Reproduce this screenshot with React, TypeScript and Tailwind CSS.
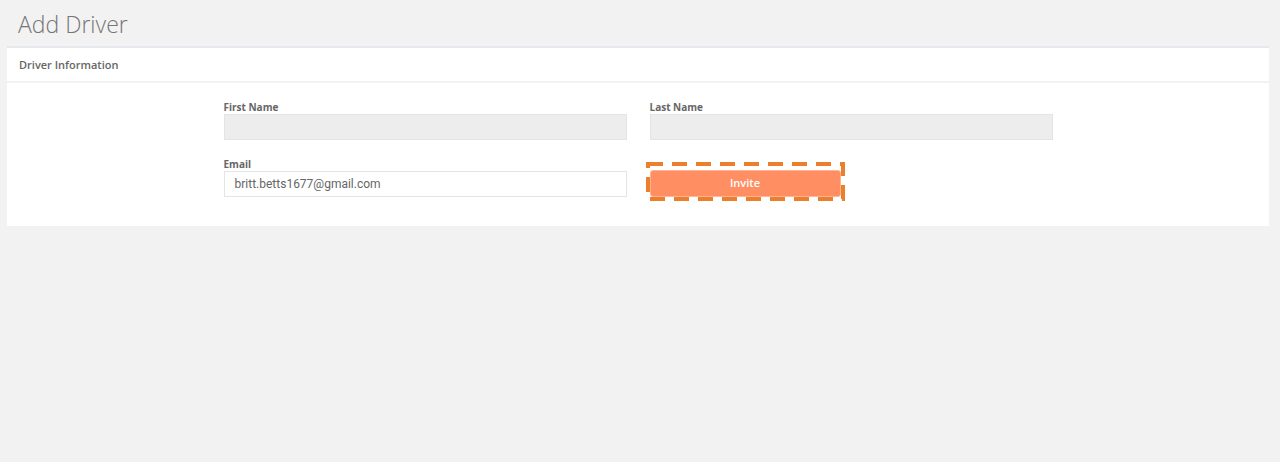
export default function App() {
  return (
    <div className="min-h-[462px] bg-[#f2f2f2] font-['Open_Sans',sans-serif]">
      <div className="h-[46px] pl-[18px] pt-[6px]">
        <h1 className="text-[23px] font-light leading-[36px] text-[#757575]">Add Driver</h1>
      </div>

      <div className="ml-[7px] mr-[11px] border-t-2 border-[#e5e9ed] bg-white">
        {/* panel header */}
        <div className="flex h-[35px] items-center border-b-2 border-[#f2f2f2] px-[12px] pt-[1px]">
          <span className="text-[11px] font-semibold text-[#666]">Driver Information</span>
        </div>

        <div className="mx-auto grid w-[829px] grid-cols-2 gap-x-[23px] gap-y-[17px] pt-[17px] pb-[29px]">
          <div>
            <label className="block text-[10px] font-bold leading-[14px] text-[#666]">First Name</label>
            <div className="h-[26px] w-[403px] border border-[#e4e4e4] bg-[#ededed]" />
          </div>
          <div>
            <label className="block text-[10px] font-bold leading-[14px] text-[#666]">Last Name</label>
            <div className="h-[26px] w-[403px] border border-[#e4e4e4] bg-[#ededed]" />
          </div>
          <div>
            <label className="block text-[10px] font-bold leading-[14px] text-[#666]">Email</label>
            <div className="flex h-[26px] w-[403px] items-center border border-[#e4e4e4] bg-white pl-[10px] font-['Roboto',sans-serif] text-[12px] text-[#666]">
              britt.betts1677@gmail.com
            </div>
          </div>
          <div className="relative pt-[12px]">
            <button className="h-[27px] w-[191px] rounded-[3px] border border-[#ffb392] bg-[#ff8e62] text-[11px] font-semibold text-white">
              Invite
            </button>
            <svg className="absolute left-[-4px] top-[5px]" width="199" height="39">
              <rect
                x="2"
                y="2"
                width="195"
                height="35"
                fill="none"
                stroke="#ec7f2c"
                strokeWidth="4"
                strokeDasharray="15 9"
              />
            </svg>
          </div>
        </div>
      </div>
    </div>
  );
}
